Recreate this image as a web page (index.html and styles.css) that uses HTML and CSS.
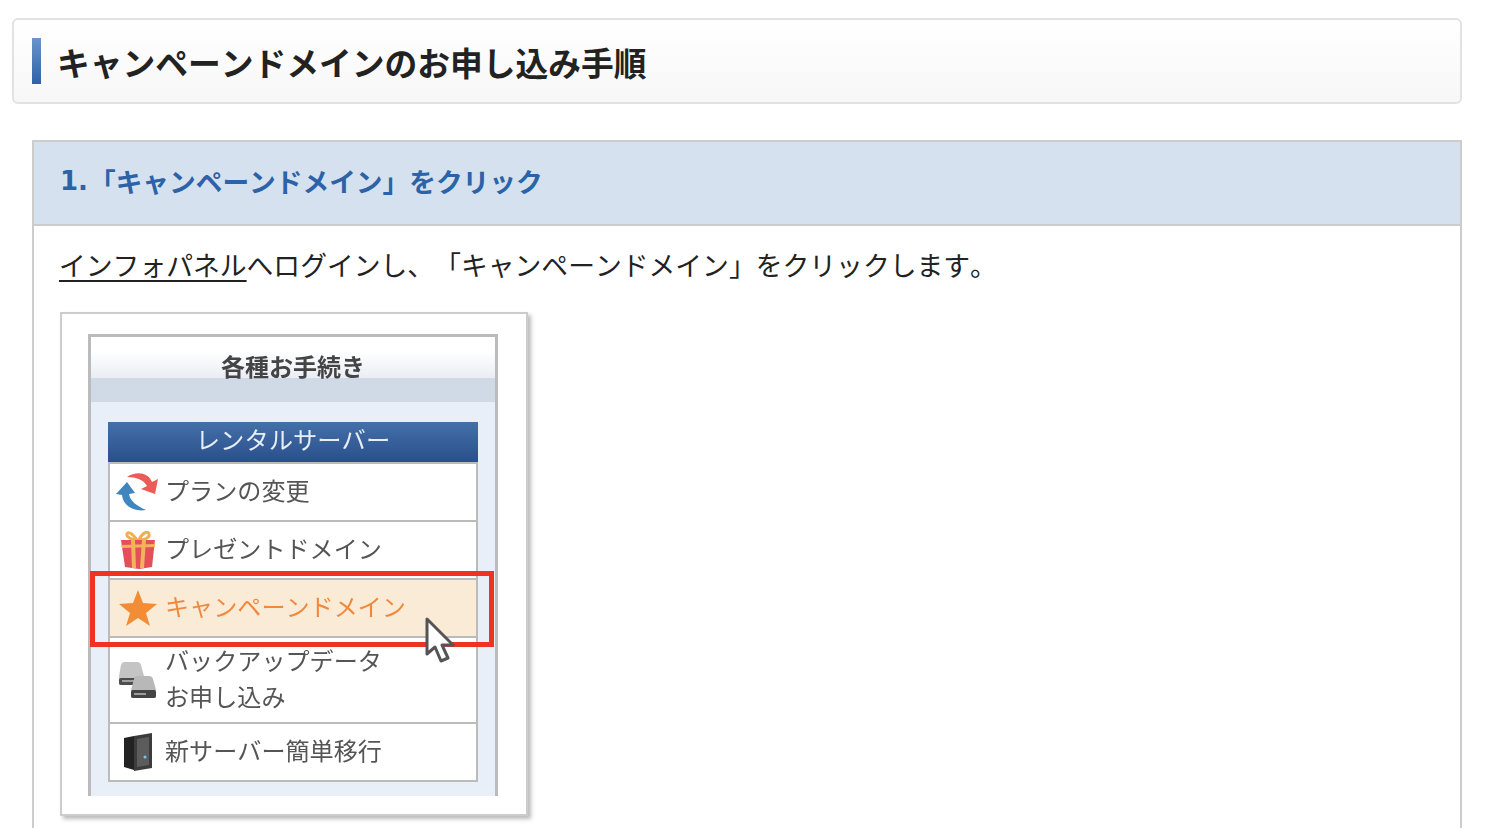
FILE: index.html
```html
<!DOCTYPE html>
<html lang="ja">
<head>
<meta charset="utf-8">
<title>キャンペーンドメインのお申し込み手順</title>
<link rel="stylesheet" href="styles.css">
</head>
<body>
<main class="page">
  <h1 class="page-title"><span class="title-mark"></span><span class="title-text">キャンペーンドメインのお申し込み手順</span></h1>
  <section class="step">
    <h2 class="step-head"><span class="step-num">1.</span>「キャンペーンドメイン」をクリック</h2>
    <div class="step-body">
      <p class="step-text"><a class="link" href="#">インフォパネル</a>へログインし、「キャンペーンドメイン」をクリックします。</p>
      <figure class="shot">
        <div class="panel">
          <div class="panel-head">各種お手続き</div>
          <div class="panel-body">
            <div class="list-head">レンタルサーバー</div>
            <ul class="list">
              <li class="row">
                <span class="ico"><svg width="44" height="40" viewBox="0 0 44 40"><path d="M11 5C20-1 32 0 36 10l6-3-3 15-14-5 6-3C28 8 20 5 11 5z" fill="#ea5c55"/><path d="M0 22l11-12 8 11-6 1c1 7 8 12 17 16C18 40 7 34 6 23z" fill="#3f86c0"/></svg></span>
                <span>プランの変更</span>
              </li>
              <li class="row">
                <span class="ico"><svg width="36" height="38" viewBox="0 0 36 38"><path d="M17 9C12 2 8 0 7 3s5 6 10 6zM19 9c3-7 9-10 10-6s-5 6-10 6z" fill="none" stroke="#f0b050" stroke-width="3"/><path d="M1 9l34 0-3 27-13 2-14-2z" fill="#e4505a"/><path d="M11 9h4l1 28h-4zM22 9h4l-2 28h-4z" fill="#f3b25c"/><path d="M1 14l34-1v3L2 17z" fill="#f3b25c"/></svg></span>
                <span>プレゼントドメイン</span>
              </li>
              <li class="row row-active">
                <span class="ico"><svg width="38" height="38" viewBox="0 0 38 38"><path d="M19 1l5 13 14 1-11 9 4 13-12-8-12 8 4-13L0 15l14-1z" fill="#f28c35"/></svg></span>
                <span>キャンペーンドメイン</span>
              </li>
              <li class="row row-tall">
                <span class="ico"><svg width="38" height="38" viewBox="0 0 38 38"><path d="M5 1h13q3 0 4 3l3 11v8q0 1-2 1H2q-2 0-2-1v-8L2 4q1-3 3-3z" fill="#c4c4c4"/><rect x="0" y="17" width="25" height="7" rx="2" fill="#4c4c4c"/><path d="M17 15h13q3 0 4 3l3 11v7q0 1-2 1H14q-2 0-2-1v-7l3-11q1-3 2-3z" fill="#b8b8b8"/><rect x="12" y="29" width="25" height="8" rx="2" fill="#444"/><path d="M15 33h12M3 20h12" stroke="#bbb" stroke-width="1.5"/></svg></span>
                <span class="two-line">バックアップデータ<br>お申し込み</span>
              </li>
              <li class="row">
                <span class="ico"><svg width="30" height="38" viewBox="0 0 30 38"><path d="M1 5l10-2v34L1 34z" fill="#222"/><path d="M11 3l18-3v35l-18 3z" fill="#3c3c3c"/><path d="M14 6l12-2v28l-12 2z" fill="#5c5c5c"/><circle cx="22" cy="24" r="1.5" fill="#7fc4e8"/></svg></span>
                <span>新サーバー簡単移行</span>
              </li>
            </ul>
          </div>
        </div>
        <div class="highlight"></div>
        <svg class="cursor" width="32" height="46" viewBox="0 0 32 46"><path d="M3 2v35l8-7 6 14 7-3-6-13h11z" fill="#fff" stroke="#555" stroke-width="3" stroke-linejoin="round"/></svg>
      </figure>
    </div>
  </section>
</main>
</body>
</html>
```

FILE: styles.css
```css
* { box-sizing: border-box; }
html, body { margin: 0; padding: 0; height: 828px; overflow: hidden; background: #fff; }
body { font-family: "Noto Sans CJK JP", "Liberation Sans", sans-serif; color: #222; text-spacing-trim: space-all; font-kerning: none; }
.page { padding: 18px 36px 0 12px; }

.page-title {
  display: flex; align-items: center; gap: 16px;
  height: 86px; margin: 0; padding: 0 0 0 18px;
  border: 2px solid #e2e2e2; border-radius: 6px;
  background: linear-gradient(#fff, #f7f7f7);
  font-size: 32.75px; font-weight: 700; line-height: 1; color: #222;
}
.title-mark { width: 9px; height: 46px; background: linear-gradient(#6a94cb, #2d62a8); }
.title-text { padding-top: 2px; }

.step { margin: 36px 0 0 20px; height: 800px; border: 2px solid #ccc; border-bottom: 0; }
.step-head {
  display: flex; align-items: center;
  height: 84px; margin: 0; padding: 0 0 4px 26px;
  background: #d5e1ee; border-bottom: 2px solid #ccc;
  font-size: 26.7px; font-weight: 700; line-height: 1; color: #2b62a8;
}
.step-num { width: 29px; font-family: "DejaVu Sans", sans-serif; font-size: 26px; }
.step-body { padding: 20px 0 0 26px; }
.step-text { margin: 0 0 0 -1px; font-size: 26.8px; line-height: 38px; color: #222; }
.link { color: #222; text-decoration: underline; text-underline-offset: 4px; text-decoration-thickness: 2px; }

.shot {
  position: relative;
  width: 468px; height: 504px; margin: 28px 0 0;
  padding: 20px 0 0 26px;
  background: #fff; border: 2px solid #ccc;
  box-shadow: 3px 3px 4px #bbb;
}
.panel {
  width: 410px; height: 462px;
  border: 3px solid #bbb; border-bottom: 0;
  background: #e8eff8;
  filter: blur(0.7px);
}
.panel-head {
  height: 65px; padding-top: 13px;
  background: linear-gradient(#fff 0, #fff 14px, #e9edf4 41px, #cfdae6 41px, #cfdae6 65px);
  font-size: 24px; font-weight: 700; line-height: 32px; text-align: center; color: #444;
}
.panel-body { padding: 20px 17px 0; }
.list-head {
  height: 40px;
  background: linear-gradient(#4470a8, #2a4f8c);
  font-size: 24.3px; line-height: 34px; text-align: center; color: #e8eef6;
}
.list { list-style: none; margin: 0; padding: 0; background: #fff; border-top: 2px solid #bbb; }
.row {
  display: flex; align-items: center;
  height: 58px; padding: 0 0 4px 2px;
  border: 2px solid #bbb; border-top: 0;
  font-size: 24.1px; line-height: 36px; color: #555;
}
.row-tall { height: 86px; }
.row-active { background: #faebd7; color: #f0883e; }
.ico { display: flex; justify-content: center; width: 52px; margin-right: 1px; padding-top: 3px; flex: none; }
.ico svg { display: block; }

.highlight {
  position: absolute; left: 28px; top: 257px;
  width: 404px; height: 76px;
  border: 5px solid #ee3322;
}
.cursor { position: absolute; left: 362px; top: 303px; filter: blur(0.5px); }
```
